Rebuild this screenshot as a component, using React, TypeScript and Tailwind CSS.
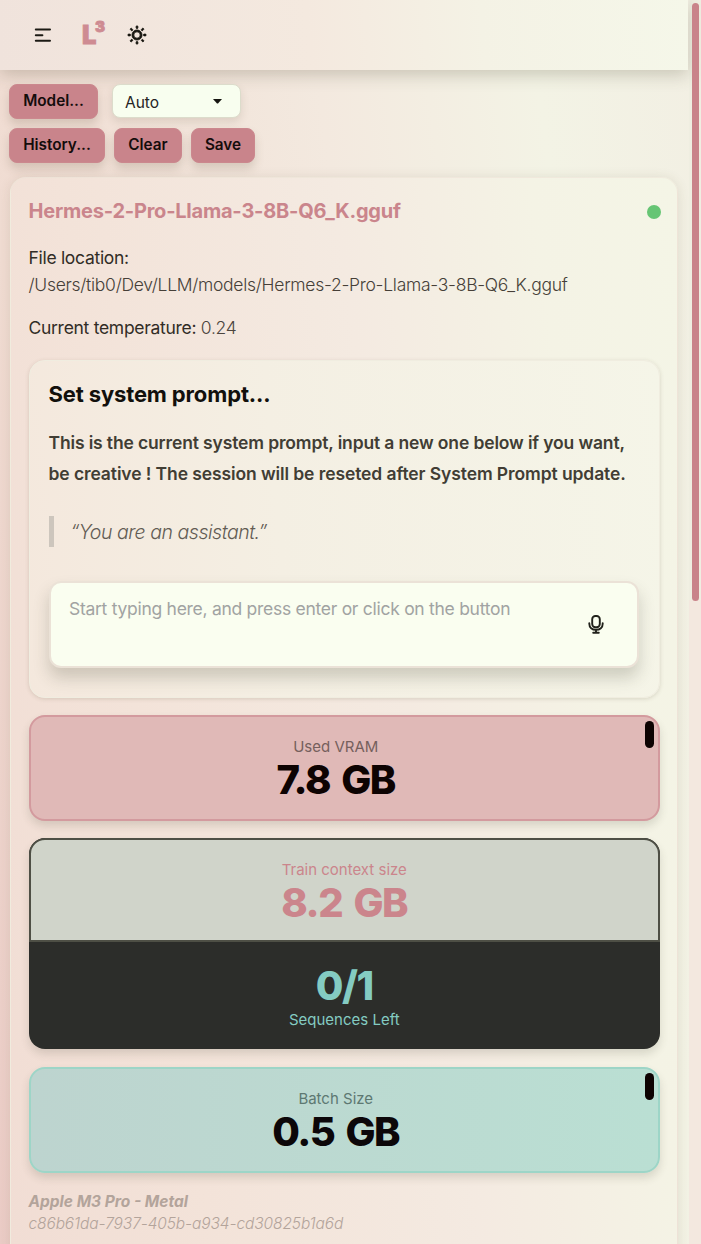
import React from 'react';

function MenuIcon() {
  return (
    <svg className="size-5" viewBox="0 0 20 20" fill="none" stroke="#1c1a14" strokeWidth="2" strokeLinecap="round">
      <path d="M2.8 4.6H17M2.8 10.2H9.4M2.8 15.8H17" />
    </svg>
  );
}

function SunIcon() {
  return (
    <svg className="size-[22px]" viewBox="0 0 24 24" fill="#15130d">
      <path d="M5.64,17l-.71.71a1,1,0,0,0,0,1.41,1,1,0,0,0,1.41,0l.71-.71A1,1,0,0,0,5.64,17ZM5,12a1,1,0,0,0-1-1H3a1,1,0,0,0,0,2H4A1,1,0,0,0,5,12Zm7-7a1,1,0,0,0,1-1V3a1,1,0,0,0-2,0V4A1,1,0,0,0,12,5ZM5.64,7.05a1,1,0,0,0,.7.29,1,1,0,0,0,.71-.29,1,1,0,0,0,0-1.41l-.71-.71A1,1,0,0,0,4.93,6.34Zm12,.29a1,1,0,0,0,.7-.29l.71-.71a1,1,0,1,0-1.41-1.41L17,5.64a1,1,0,0,0,0,1.41A1,1,0,0,0,17.66,7.34ZM21,11H20a1,1,0,0,0,0,2h1a1,1,0,0,0,0-2Zm-9,8a1,1,0,0,0-1,1v1a1,1,0,0,0,2,0V20A1,1,0,0,0,12,19ZM18.36,17A1,1,0,0,0,17,18.36l.71.71a1,1,0,0,0,1.41,0,1,1,0,0,0,0-1.41ZM12,6.5A5.5,5.5,0,1,0,17.5,12,5.51,5.51,0,0,0,12,6.5Zm0,9A3.5,3.5,0,1,1,15.5,12,3.5,3.5,0,0,1,12,15.5Z" stroke="#15130d" strokeWidth="0.9" />
    </svg>
  );
}

function MicIcon() {
  return (
    <svg className="h-[19px] w-[16px]" viewBox="0 0 16 19" fill="none" stroke="#20211b" strokeWidth="1.9" strokeLinecap="round" strokeLinejoin="round">
      <rect x="4.2" y="1" width="7.6" height="11.2" rx="3.2" />
      <path d="M1.3 8.2V8.8C1.3 12.5 4 14.8 8 14.8S14.7 12.5 14.7 8.8V8.2M8 14.8V17.8M5.2 17.8H10.8" />
    </svg>
  );
}

function ActionButton({ className, children }: { className: string; children: React.ReactNode }) {
  return (
    <button className={`h-[35px] rounded-lg border border-[#cb888e] bg-[#c9848b] text-center text-[15.3px] font-semibold text-[#140c0b] shadow-[0_6px_10px_rgba(90,70,50,0.18)] ${className}`}>
      {children}
    </button>
  );
}

function Handle() {
  return <span className="absolute right-[4px] top-[4px] h-[27px] w-[9px] rounded-[4.5px] bg-[#0d0302]" />;
}

const valueClass = 'text-[40px] font-extrabold leading-[42px] tracking-[-1.5px] [word-spacing:4px]';

export default function App() {
  return (
    <div className="relative h-[1244px] w-[701px] overflow-hidden bg-[linear-gradient(82deg,#ebccc6_0%,#f0dcd2_16%,#f3e9df_55%,#f3f3e5_80%,#f2efe3_100%)] font-['Inter','Liberation_Sans',sans-serif] text-[#24201b]">
      <span className="absolute left-[689px] top-0 h-[600px] w-[12px] bg-[#efeee1]" />
      <span className="absolute left-[689px] top-[600px] h-[644px] w-[12px] bg-[#f3e8df]" />
      <header className="relative flex h-[70px] w-[688px] items-center bg-[linear-gradient(85deg,#f0e3dc_0%,#f4e9df_45%,#f4f2e5_70%,#f5f7e9_100%)] pl-[33px] shadow-[0_5px_16px_rgba(70,65,40,0.24)]">
        <MenuIcon />
        <div className="ml-[29px] w-[25px] text-[25.5px] font-black leading-[30px] text-[#ce8b92] [-webkit-text-stroke:0.8px_#ce8b92]">
          <span className="relative inline-block w-[14px]">L<span className="absolute left-[13px] top-[-3px] text-[15px] leading-5">3</span></span>
        </div>
        <div className="ml-[19px]"><SunIcon /></div>
      </header>

      <div className="relative flex flex-col gap-[9px] pl-[9px] pt-[14px]">
        <div className="flex gap-[14px]">
          <ActionButton className="w-[89px]">Model...</ActionButton>
          <div className="flex h-[34px] w-[129px] items-center justify-between rounded-lg border border-[#dcdccb] bg-[#f8feef] pl-[12px] pr-[18px] text-[15.5px] text-[#24231f] shadow-[0_4px_8px_rgba(90,80,60,0.14)]">
            <span className="pt-[3px]">Auto</span>
            <svg className="mt-px h-[5px] w-[9px]" viewBox="0 0 9 5"><path d="M0 0H9L5 4.5H4Z" fill="#151510" /></svg>
          </div>
        </div>
        <div className="flex gap-[9px]">
          <ActionButton className="w-[96px]">History...</ActionButton>
          <ActionButton className="w-[68px]">Clear</ActionButton>
          <ActionButton className="w-[64px]">Save</ActionButton>
        </div>
      </div>

      <main className="relative ml-[9.5px] mt-[14px] h-[1100px] w-[668px] rounded-t-2xl border border-[#ece6d8]/60 bg-[linear-gradient(82deg,#f1ddd4_0%,#f3e3d9_25%,#f4eae1_58%,#f4f3e5_82%,#f4f5e6_100%)] px-[18px] shadow-[0_1px_12px_rgba(90,80,50,0.13)]">
        <div className="flex items-center justify-between pt-[18px]">
          <h1 className="text-[20px] font-bold leading-[31px] tracking-[-0.22px] text-[#ca858c]">Hermes-2-Pro-Llama-3-8B-Q6_K.gguf</h1>
          <span className="mr-[-2px] size-[14px] rounded-full bg-[#66c574]" />
        </div>
        <div className="mt-[17px] text-[17.5px] leading-[27px] tracking-[-0.3px] text-[#312c26]">File location:</div>
        <div className="text-[17.5px] font-light leading-[27px] tracking-[-0.28px] text-[#463f38]">/Users/tib0/Dev/LLM/models/Hermes-2-Pro-Llama-3-8B-Q6_K.gguf</div>
        <div className="mt-[17px] text-[17.5px] leading-[26px] tracking-[-0.29px] text-[#312c26]">
          Current temperature: <span className="font-light text-[#4b443d]">0.24</span>
        </div>

        <section className="mt-[19px] h-[338px] w-[631px] rounded-2xl border border-[#f0ede0] bg-[linear-gradient(85deg,#f4e8dd_0%,#f4efe3_40%,#f5f5e8_100%)] px-[19px] shadow-[0_1px_4px_rgba(90,80,50,0.18)]">
          <h2 className="pt-[18px] text-[22px] font-bold leading-[30px] tracking-[-0.14px] text-[#12100c]">Set system prompt...</h2>
          <p className="mt-[18px] whitespace-nowrap text-[17.5px] font-semibold leading-[31px] text-[#413d34]">
            <span className="tracking-[-0.14px]">This is the current system prompt, input a new one below if you want,</span><br />
            <span className="tracking-[-0.1px]">be creative ! The session will be reseted after System Prompt update.</span>
          </p>
          <blockquote className="mt-[27px] h-[31px] border-l-[5px] border-[#cdc6bd] pl-[17px] text-[19.5px] font-light italic leading-[33px] tracking-[-0.46px] text-[#625c54]">“You are an assistant.”</blockquote>
          <div className="mt-[34px] flex h-[87px] w-[590px] justify-between rounded-xl border-2 border-[#ebe2d7] bg-[#fafef0] pl-[18.5px] pr-[33px] shadow-[0_10px_16px_rgba(70,70,50,0.22)]">
            <span className="pt-[12px] text-[17.5px] leading-[27px] tracking-[-0.28px] text-[#a1a3a2]">Start typing here, and press enter or click on the button</span>
            <span className="pt-[32px]"><MicIcon /></span>
          </div>
        </section>

        <section className="relative mt-[17px] flex h-[106px] w-[631.5px] flex-col items-center rounded-2xl border-2 border-[#d39a9e] bg-[#e0b9b7] pr-[17px] pt-[18px] shadow-[0_5px_8px_rgba(70,70,50,0.16)]">
          <div className="text-[15px] leading-[24px] text-[#75605d]">Used VRAM</div>
          <div className={`${valueClass} text-[#0d0302]`}>7.8 GB</div>
          <Handle />
        </section>

        <section className="mt-[17px] h-[211px] w-[631.5px] overflow-hidden rounded-2xl bg-[#2c2d2a] text-center shadow-[0_5px_8px_rgba(70,70,50,0.16)]">
          <div className="h-[104px] rounded-t-2xl border-2 border-[#4e4f45] bg-[#d0d4ca] pt-[18px] text-[#cb858c]">
            <div className="text-[15px] leading-[24px]">Train context size</div>
            <div className={valueClass}>8.2 GB</div>
          </div>
          <div className="pt-[23px] text-[#84cbc2]">
            <div className={valueClass}>0/1</div>
            <div className="text-[15px] leading-[25px]">Sequences Left</div>
          </div>
        </section>

        <section className="relative mt-[18px] flex h-[106px] w-[631.5px] flex-col items-center rounded-2xl border-2 border-[#9dd5c7] bg-[linear-gradient(90deg,#bdd4cf,#badfd3)] pr-[17px] pt-[18px] shadow-[0_5px_8px_rgba(70,70,50,0.16)]">
          <div className="text-[15px] leading-[24px] text-[#5d7872]">Batch Size</div>
          <div className={`${valueClass} text-[#0c0709]`}>0.5 GB</div>
          <Handle />
        </section>

        <footer className="pt-[18px] italic text-[#b3a49b]">
          <div className="text-[15.5px] font-bold leading-[22px]">Apple M3 Pro - Metal</div>
          <div className="text-[15.5px] font-light leading-[22px] tracking-[-0.1px]">c86b61da-7937-405b-a934-cd30825b1a6d</div>
        </footer>
      </main>

      <span className="absolute left-[692px] top-[3px] h-[598px] w-[7px] rounded-full bg-[#c9838a]" />
    </div>
  );
}
